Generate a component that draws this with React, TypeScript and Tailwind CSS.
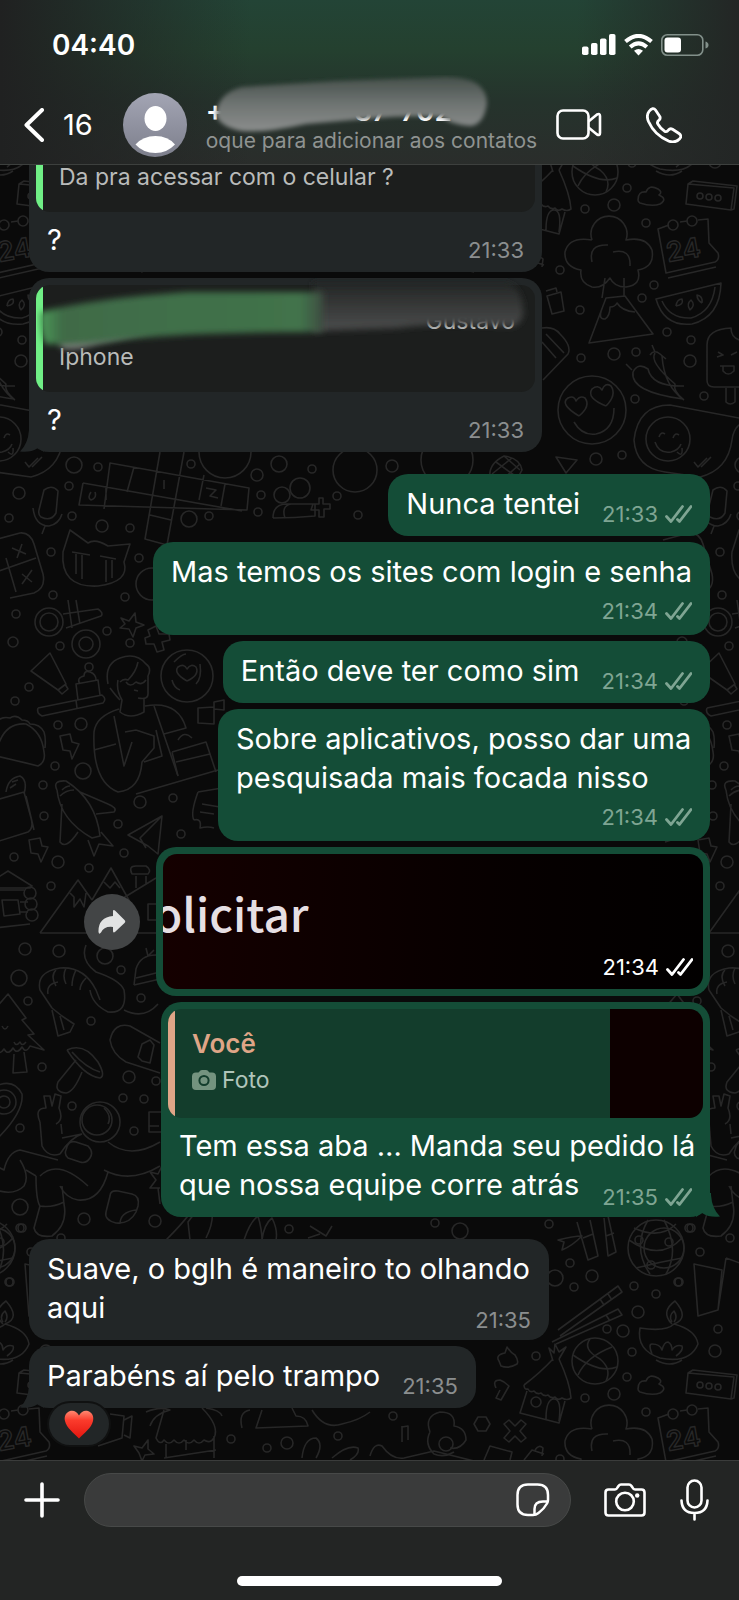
import { ReactNode } from "react";

// Wallpaper line drawings, repeated every TILE_W x TILE_H
const TILE_W = 669;
const TILE_H = 1189;

const DOODLES = [
  // hut
  "M524 196Q540 184 553 170M524 196q0 5 4 4q2 4 6 2q3 4 7 2q3 4 7 2q3 4 7 2q3 4 7 1q5 3 9 0Q570 194 559 170M527 202L520 224L559 234L565 212M546 230q0-20 8-20q8 0 5 22M553 172l-4-13l5 5l1-9l4 8l7-5l-7 12",
  // basketball
  "M573 166Q600 185 617 178M578 186Q586 168 612 158M590 150Q582 160 600 170Q612 180 606 192",
  // blossom cloud
  "M592 240a18 18 0 1 1 34 0q20-4 26 10q3 17-14 20q4 15-12 17q-12 0-16-9q-8 11-18 9q-13-4-11-17q-17-3-16-18q4-16 27-12M592 262q-4-18 16-17M613 252q18-4 17 14M605 278l-3 20M624 278v18",
  // volcano
  "M606 298L589 343L653 334L625 296ZM603 306q-6 14 2 13q5-3 5-12q5 0 7-4q5 8 18 9",
  // calendar
  "M669 225L658 229L666 273L715 262q5-3 3-9l-9-10l-1-24l-10 1M680 222l7-1M668 278l48-11",
  // box with dots
  "M688 184L686 204L731 210L734 188ZM688 184l5-3l44 5l-3 23l-3 1",
  // small cloud
  "M638 200q0-9 8-8q3-8 12-3q5 3 1 6q9 4 1 9q-8 3-20-1q-2-1-2-3",
  // melon
  "M656 299q8 28 36 25q28-7 29-41ZM662 301q8 18 29 17q21-6 24-31M676 306q1-7 6-7q2 6-6 7M690 310q-4-6 1-10q5 5-1 10M702 303q-5-3-5-8q6 1 5 8",
  // lotion
  "M547 296l14-4l3 19l-12 3ZM546 291l10-3l1 4",
  // pencil
  "M542 328q12-2 18 6q12 12 8 20L543 380M546 334l18 19M542 342l14 16",
  // love eyes
  "M579 416q-20-12-11-18q6-3 8 3q4-6 9-3q6 8-6 18M606 406q-20-8-14-17q6-5 10 1q3-8 9-4q6 9-5 20M574 422q8 14 22 12q18-4 18-26",
  // chilies
  "M633 372q-3 20 50 27q-10-8-8-15q-26-22-20-31M633 372q5-10 15-3q4 18 36 17M650 355q4-6 10-1l6 5M662 356q2 30 22 44M632 370l-6-6M655 352l-3-7",
  // ice pop
  "M707 380v-35q0-16 24-17q0 12 14 13v46l-31 0q-7 0-7-7M726 388v14q4 4 9 0v-14M718 352l5 3l-6 2M731 355l6-3M720 366h14v5q-6 6-11 0v-5",
  // chat bubble with face
  "M739 418L670 405Q638 405 634 440Q636 468 665 472L700 477Q728 470 732 440Q734 425 745 422M659 437q2-6 6-3M673 438q2-6 6-3M655 442q4 12 16 10q8-2 10-8M677 452q6 6 5-4M694 462l4 5l9-9M701 467l10-10",
  // arrow
  "M556 457l21 3l-11 13Z",
  // pineapple
  "M490 478q-2-14 14-22q16 2 18 14q-4 10-16 12ZM496 462l22 16M504 456l16 14M492 474l20-16M502 480l18-16",
  // microphone
  "M44 490q8-6 14 1l-2 22q-5 9-15 4q-3-2-2-7ZM33 508q2 18 16 18q10-2 13-12M45 526l-3 8",
  // crossword
  "M83 483L79 505L247 510L249 488L110 463L104 509M83 483L242 511M160 452L145 539L167 545L184 452M134 467L127 492M204 475L199 500M225 484L221 506M150 515L171 520M106 486v14M91 492q-4 6 0 8q6-2 4-8M164 480v9M206 488l10 2l-6 6l8 2",
  // contacts
  "M273 518q0-14 14-14h28v12q-20 2-42 2M285 518q-4-12 6-14M313 504h6v-6h4v6h7v5h-6v8h-5v-7h-8Z",
  // crying cat
  "M70 530L63 552Q60 588 98 586Q130 582 124 562L130 544L108 546Q95 538 88 543ZM72 552l18 3M76 554v20M82 555v24M100 556l16 3M106 560v22M112 560v18",
  // game pad keys
  "M-6 540L20 533Q30 532 34 544L43 574Q46 588 34 593L10 598M6 558L16 592M-4 572L36 558M12 548l14 6M22 544l-5 14M22 574l10 8M32 570l-10 14",
  // rollers
  "M63 614L98 609Q104 613 101 616L66 628M68 600L72 628M76 600L80 624",
  // star + plus
  "M121 618l8 3l6-8l1 9l8 3l-8 3l-3 9l-4-8l-9-1l5-4ZM148 630l8-4l3 8h10l1 6l-8 2l2 8l-7 2l-3-8h-8l-1-6l5-2Z",
  // tube
  "M31 671L50 653L66 684L58 690ZM58 690l4 4l6-5l-3-5",
  // tray with cake
  "M38 708L102 695q5 4 1 8L42 716q-6-3-4-8M78 700l-2-16l22-4l2 15M80 684q-4-6 4-8q0-6 6-4q6 2 6 8M76 700l1 8",
  // barista
  "M108 684Q104 664 120 658Q136 652 146 664Q152 668 148 676L148 694Q148 700 138 698M118 680Q116 690 122 700L120 712Q130 720 144 712V698M110 688Q116 696 120 700M120 682q4-4 8-2q8-8 10-18M126 682q4 6 10 0q6 4 10-2M134 690l4 1M119 709Q96 716 94 732Q92 782 118 792Q140 790 142 762L154 748V736L136 730M94 750L116 744M114 716L124 766L132 742M145 706Q178 700 186 728L164 734M154 706L178 776M136 794L218 770M125 732L136 730M144 762L162 756L156 730",
  // coin heart
  "M187 681q-14-8-9-14q6-4 9 2q4-6 9-2q4 8-9 14M174 662q8-8 12-8M200 664q2 14-4 20M172 680q2 8 8 10",
  // squares
  "M198 708l16-1v17l-16-1ZM214 702l10-2v10l-10-1Z",
  // taco
  "M-4 754Q2 722 26 724Q42 732 44 752Q46 762 38 766Q14 760-4 756M-4 722q6-6 14-4q6-4 12 2q6 0 8 4q10 0 14 8q2 6 1 16",
  // bolts
  "M60 736l10-2l2 8l7 2l-7 15l-2-8l-7-1ZM29 840l11-2l2 8l6 1l-7 15l-3-8l-7-1Z",
  // cake slice
  "M172 752L206 742L216 772M178 740q6-10 14-2M176 762L210 754M172 752L178 776",
  // toy rocket
  "M57 790Q52 780 66 781Q96 800 100 836L92 838Q60 820 57 790M80 792L108 804Q118 808 114 812L96 814M62 804L60 842Q66 850 78 832M62 790q4-4 8-4M88 840l6 16l5-12l14 2l-12-14M60 796q6-6 14-6",
  // paper planes
  "M128 835L162 816L158 854L148 846ZM162 816L140 838L146 848",
  // message scroll
  "M198 792L222 788M194 820q-4-6 4-28M194 820q8-2 6 8q8-2 14 0M202 804l18 3M200 812l14 2",
  // bag
  "M-4 842L28 832Q34 828 31 818L24 792L-4 800M6 792q2-14 14-16q8 4 4 18M10 788l6-4M12 782l6-2M26 796L34 830",
  // cabin
  "M-6 880L8 871L32 886L30 888H-6M2 900h16l2 14l-16 2ZM20 902h8M20 912h8M-6 890h30M-6 928L30 924",
  // mountains
  "M40 933L78 880L92 900M92 900L111 868L130 902M40 933H160M70 893l4 4v10l6-8l4 8l2-14M104 882l6 6l5-6l5 6",
  // chimney
  "M132 874q-4-8 4-8h10q6 4 2 8ZM136 876v12M146 876v8M120 900L156 878M148 904h10v16h-10Z",
  // shrimp
  "M40 990Q36 972 60 968Q84 966 96 990L100 1000M48 994Q46 984 58 982M56 970Q50 976 56 986M66 968Q62 976 66 984M76 970Q72 978 72 986M86 978Q80 984 80 990M52 1008L62 1016L74 1024L70 1032L58 1036L52 1010M60 1016L64 1030M40 990L52 1008",
  // hose
  "M86 945Q80 960 96 972Q120 980 124 990Q128 1014 108 1012Q92 1004 90 990M124 1010Q144 1020 158 1004",
  // woolly hat
  "M134 985l2-16q4-14 20-14M134 985l26-6M136 978l24-6M146 948l2 8l6-6",
  // pine
  "M-4 1008L8 994L26 1018L22 1020L34 1034L28 1035L44 1050L30 1046q-4 8-8 1q-5 8-9 1q-5 8-9 1q-4 6-8 2M14 1054L13 1073L27 1072L24 1052M2 1026q3 6 6 0M14 1042q2 5 6 0q2 5 6 0",
  // mushroom
  "M67 1050Q84 1042 98 1062Q106 1076 100 1078Q84 1076 67 1050M76 1060L58 1082Q54 1092 66 1093Q74 1092 82 1072M72 1052q14 16 28 20",
  // skateboard
  "M160 1043L130 1026Q114 1022 110 1040Q112 1054 126 1062L160 1073M142 1044l8-4l4 5l-4 18l-8-2l-4-4Z",
  // map pin
  "M-4 1086Q14 1078 22 1094Q24 1112-2 1138",
  // waving spaceman
  "M40 1122Q34 1108 46 1108L44 1096l6 0l2 10l3-12l6 2l-2 12Q64 1120 56 1124M40 1122L42 1146Q48 1158 60 1154M62 1134L61 1124M62 1138L82 1134M60 1154Q70 1138 82 1134M108 1142Q130 1160 160 1142M104 1170Q130 1184 160 1166M108 1172Q100 1202 78 1200Q66 1198 60 1186M40 1176Q58 1158 88 1186M36 1176Q36 1200 40 1206L34 1228Q36 1238 52 1236Q68 1224 64 1204L62 1186M40 1206Q52 1208 64 1202M58 1160L20 1150Q8 1152 4 1170L-4 1166M20 1160Q30 1176 24 1186Q14 1196-4 1190M26 1170L36 1176M66 1150q2-10 10-8l12 4q6 6 2 12q-4 6-10 4l-12-4q-4-4-2-8M104 1108Q112 1116 108 1124",
  // sticker
  "M110 1196Q110 1190 118 1191L132 1194Q140 1196 138 1206L136 1212Q130 1224 116 1223Q104 1220 106 1212ZM120 1224Q120 1212 136 1210",
  // gift corner
  "M149 1112h14v20h-14ZM149 1126h10M150 1172l8 2l4-8M150 1172l6 8l-6 8l10 0M158 1188l2 16",
  // flower row
  "M166 1240Q186 1220 192 1210M190 1240L188 1222L194 1214M206 1238Q214 1222 212 1210M244 1240Q250 1222 258 1216Q262 1230 262 1240M262 1240Q264 1224 272 1218Q278 1230 276 1240M310 1226l16 10l6-10M308 1238l12-4",
  // bamboo
  "M577 1222L588 1260L598 1256L590 1220M604 1218L608 1256L616 1252L608 1216M583 1238l10-4M606 1236l8-3M558 1240q16-4 24-4q-10 10-20 14l2-8Z",
  // globe lines
  "M629 1240Q660 1262 682 1238M634 1228Q660 1240 676 1224M636 1268Q660 1262 682 1258M648 1220Q632 1248 650 1274M664 1220Q680 1250 666 1274",
  // cards
  "M694 1264L722 1270L718 1310L698 1316ZM726 1258L718 1310M726 1258L748 1266",
  // chopsticks
  "M558 1330L618 1286l4 6L560 1336M552 1342L618 1309l4 6L556 1344M608 1294l4 6M600 1299l4 6M606 1315l4 6",
  // oil lamp
  "M640 1328Q636 1350 660 1358Q690 1364 698 1344Q696 1330 674 1324Q666 1332 640 1328ZM672 1324Q660 1312 675 1301Q690 1318 674 1324M652 1354q-4-10 0-10q8 0 10 6q2-8 6-8q4 2 4 8q4-6 10-4q2 4-6 10M656 1360q14 8 26 0M672 1322q-4-6 2-11q4 6 0 11",
  // leaf bits
  "M499 1361q-4-6 6-8l2-6q4 6 8 8q4 6 2 9q-8 5-16 2ZM496 1388q-4-8 4-8l4 2l5 4l-8 14l-5-2l4-8",
  // hex and cross
  "M474 1424l4-7h8l4 7l-4 7h-8ZM504 1424l5-4l6 6l6-6l5 4l-6 7l6 7l-5 4l-6-6l-6 6l-5-4l6-7Z",
  // notes
  "M402 1426v16M402 1427l6-1v14M370 1456q4-14 12-10q10 14 22 12l30-7l40 10",
  // bud
  "M430 1432q-6-16 10-20q16 0 14 14q12 2 12 14q-6 10-16 8M430 1432q-6 12 4 22q10 4 20-2",
  // gifts
  "M484 1460l6-14l22 6l-2 8M524 1460l8-10l12 4M535 1450q4-6 8-2l-1 8",
  // camcorder
  "M98 1446L122 1438L124 1416L110 1414M124 1420l8-4l-2 22l-6-3",
  // beach hut
  "M164 1410L156 1438q4 8 8 2q5 6 10 0q5 6 10 0q5 6 10 0q5 6 10 0q6 4 10-2q6-12-12-30M166 1444v14M186 1440v10M214 1436v22M164 1458l52-8M146 1412q14-6 24-2q-16 4-20 16M206 1408q14 2 16 8",
  // food truck
  "M242 1428q-4-16 8-18M262 1410l-6 18l52-2q-2-10-12-10l-4-8M312 1410q12 20 30 14q18-4 28-12",
  // sandal
  "M302 1458q2-20 14-20q8 6 0 20M332 1458q16-14 26-10q2 6-8 12M134 1446l8 2l6-8l0 9l6 5l-9 1l-3 6l-3-8Z",
];

const RINGS = [
  [595, 172, 23], [536, 213, 5], [673, 225, 5], [692, 221, 5], [700, 196, 3], [709, 197, 3], [718, 198, 3],
  [627, 188, 4], [585, 209, 4], [614, 205, 6], [646, 223, 4], [654, 285, 4], [642, 298, 4], [560, 270, 4],
  [580, 310, 4], [667, 332, 4], [691, 340, 4], [614, 354, 6], [636, 352, 4], [690, 361, 6], [581, 358, 4],
  [592, 410, 34], [635, 399, 4], [704, 396, 4], [668, 439, 22], [596, 459, 6], [622, 455, 4], [447, 460, 26],
  [392, 466, 6], [74, 465, 8], [98, 467, 4], [69, 486, 4], [19, 493, 6], [9, 518, 4], [72, 516, 4], [102, 526, 6],
  [130, 528, 4], [189, 519, 8], [209, 516, 4], [191, 464, 4], [225, 452, 26], [257, 475, 6], [279, 464, 8],
  [312, 469, 4], [282, 495, 8], [300, 488, 10], [261, 495, 4], [258, 512, 4], [337, 496, 4], [358, 515, 4],
  [355, 470, 22], [51, 552, 4], [139, 558, 4], [152, 584, 16], [53, 595, 4], [125, 597, 4], [16, 614, 4],
  [49, 622, 14], [49, 622, 9], [86, 644, 14], [86, 644, 7], [107, 631, 4], [60, 646, 4], [130, 643, 4],
  [13, 642, 5], [89, 667, 4], [29, 687, 4], [15, 701, 4], [187, 676, 26], [58, 725, 4], [81, 724, 6],
  [55, 766, 4], [83, 771, 8], [43, 785, 4], [140, 802, 6], [173, 798, 4], [44, 816, 4], [118, 824, 4],
  [181, 834, 4], [124, 853, 4], [58, 862, 6], [14, 857, 4], [89, 868, 4], [51, 886, 4], [30, 893, 6],
  [31, 904, 6], [32, 915, 6], [25, 949, 6], [59, 951, 6], [105, 956, 8], [121, 970, 4], [19, 978, 8],
  [28, 1001, 4], [91, 1021, 4], [141, 998, 4], [42, 1067, 4], [129, 1077, 6], [156, 1081, 4], [4, 1102, 6],
  [4, 1102, 12], [72, 1106, 4], [123, 1098, 4], [144, 1099, 4], [20, 1128, 4], [134, 1131, 4],
  [100, 1122, 20], [97, 1120, 15], [20, 1207, 8], [84, 1219, 6], [22, 1228, 4], [155, 1221, 6], [-5, 1248, 20],
  [10, 1282, 4], [435, 1223, 4], [460, 1231, 8], [549, 1224, 4], [289, 1229, 4], [656, 1248, 28], [689, 1228, 4],
  [730, 1238, 4], [700, 1252, 4], [639, 1240, 4], [669, 1242, 4], [651, 1265, 4], [570, 1263, 4], [592, 1276, 6],
  [574, 1287, 4], [634, 1286, 4], [656, 1294, 4], [678, 1282, 4], [638, 1312, 6], [555, 1278, 8], [607, 1329, 4],
  [623, 1331, 6], [632, 1352, 4], [536, 1356, 4], [718, 1329, 4], [715, 1351, 6], [393, 1416, 4],
  [446, 1444, 7], [231, 1439, 4], [267, 1448, 4], [287, 1443, 6], [338, 1436, 4],
];

const OFFSETS = [-1, 0, 1].flatMap((x) => [-1, 0, 1].map((y) => [x * TILE_W, y * TILE_H]));

function Wallpaper() {
  return (
    <svg className="absolute inset-0 h-full w-full" fill="none" stroke="#272727" strokeWidth="1.6" strokeLinejoin="round" aria-hidden="true">
      <defs>
        <g id="doodles">
          {DOODLES.map((d, i) => (
            <path key={i} d={d} />
          ))}
          {RINGS.map(([cx, cy, r], i) => (
            <circle key={i} cx={cx} cy={cy} r={r} />
          ))}
          <text x="668" y="262" fontSize="27" fontFamily="Inter, sans-serif" fontWeight="600" strokeWidth="1.4" transform="rotate(-10 668 262)">24</text>
        </g>
      </defs>
      <g transform="translate(0 -165)">
        {OFFSETS.map(([x, y], i) => (
          <use key={i} href="#doodles" x={x} y={y} />
        ))}
      </g>
    </svg>
  );
}

function Ticks() {
  return (
    <svg width="27" height="18" viewBox="0 0 27 18" fill="none" stroke="currentColor" strokeWidth="2.8" strokeLinecap="round" strokeLinejoin="round" aria-hidden="true">
      <path d="M1.5 11.5L6 16.5L17.5 1.5M12.5 14.5L14.5 16.5L26 1.5" />
    </svg>
  );
}

function Stamp({ time, sent, light }: { time: string; sent?: boolean; light?: boolean }) {
  return (
    <span
      className={`flex shrink-0 items-center gap-[7px] text-[22px] leading-6 ${
        light ? "text-white" : sent ? "text-[#7fa593]" : "text-[#8b8e8f]"
      }`}
    >
      {time}
      {sent && <Ticks />}
    </span>
  );
}

function Tail({ side }: { side: "left" | "right" }) {
  return (
    <svg
      width="24"
      height="24"
      viewBox="0 0 24 24"
      className={side === "left" ? "absolute bottom-0 -left-[9px] text-[#222627]" : "absolute -right-[10px] bottom-0 -scale-x-100 text-[#144d37]"}
      fill="currentColor"
      aria-hidden="true"
    >
      <path d="M9 0V2Q8 16 0 23.5Q10 25 18 20L24 24V0Z" />
    </svg>
  );
}

type Layout = "inline" | "below" | "float";

// where the time goes relative to the text
const bodyClass: Record<Layout, string> = {
  inline: "flex items-end justify-between gap-[22px]",
  below: "flex flex-col gap-2 pb-3",
  float: "pb-2",
};
const stampClass: Record<Layout, string> = {
  inline: "pb-[10px]",
  below: "self-end",
  float: "float-right mt-5 mr-2",
};

type BubbleProps = {
  text: string;
  time: string;
  sent?: boolean;
  layout?: Layout;
  tail?: boolean;
  quote?: ReactNode;
  className?: string;
  children?: ReactNode;
};

function Bubble({ text, time, sent, layout = "inline", tail, quote, className = "", children }: BubbleProps) {
  const stamp = (
    <span className={stampClass[layout]}>
      <Stamp time={time} sent={sent} />
    </span>
  );

  return (
    <div className={`relative rounded-[20px] ${sent ? "self-end bg-[#144d37]" : "self-start bg-[#222627]"} ${className}`}>
      {tail && <Tail side={sent ? "right" : "left"} />}
      {quote && <div className="relative px-[7px] pt-[7px]">{quote}</div>}
      <div className={`relative px-[18px] ${quote ? "pt-2" : "pt-[10px]"} ${bodyClass[layout]}`}>
        {layout === "float" ? (
          <p className="-mr-2 flow-root text-[29px] leading-[39px] text-white">
            {text}
            {stamp}
          </p>
        ) : (
          <>
            <p className={`text-[29px] leading-[39px] text-white ${layout === "inline" ? "pb-[13px]" : ""}`}>{text}</p>
            {stamp}
          </>
        )}
      </div>
      {children}
    </div>
  );
}

function ReceivedQuote({ name, text }: { name?: string; text: string }) {
  return (
    <div className="flex h-[107px] overflow-hidden rounded-[14px] bg-[#1c1e1d]">
      <div className="w-[7px] bg-[#70ef86]" />
      <div className="flex flex-1 flex-col pt-[18px] pr-5 pl-4 text-[23px] leading-9">
        <div className="h-9 self-end text-[#c4c6c5]">{name}</div>
        <div className="text-[#b9bbba]">{text}</div>
      </div>
    </div>
  );
}

function SignalIcon() {
  return (
    <svg width="34" height="22" viewBox="0 0 34 22" fill="currentColor" aria-hidden="true">
      <rect x="0" y="12.5" width="6.5" height="8.5" rx="1.8" />
      <rect x="9" y="9" width="6.5" height="12" rx="1.8" />
      <rect x="18" y="4.5" width="6.5" height="16.5" rx="1.8" />
      <rect x="27" y="0" width="6.5" height="21" rx="1.8" />
    </svg>
  );
}

function WifiIcon() {
  return (
    <svg width="29" height="22" viewBox="0 0 29 22" fill="none" stroke="currentColor" strokeWidth="4" aria-hidden="true">
      <path d="M1.5 7.6Q14.5 -3.8 27.5 7.6" />
      <path d="M6.2 13Q14.5 5.6 22.8 13" />
      <path d="M10 16.8Q14.5 13 19 16.8L14.5 21.5Z" fill="currentColor" stroke="none" />
    </svg>
  );
}

function BatteryIcon() {
  return (
    <svg width="48" height="22" viewBox="0 0 48 22" fill="none" aria-hidden="true">
      <rect x="0.8" y="0.8" width="41" height="20.4" rx="5.5" stroke="#82908a" strokeWidth="1.6" />
      <rect x="3.5" y="3.5" width="16.5" height="15" rx="3" fill="#fff" />
      <path d="M44.5 7.5Q47.5 8.5 47.5 11Q47.5 13.5 44.5 14.5Z" fill="#82908a" />
    </svg>
  );
}

function Header() {
  return (
    <header className="relative z-10 shrink-0 border-b border-[#3d403e] bg-[linear-gradient(to_right,#202121_0%,#20212100_34%,#23262500_78%,#232625_100%),linear-gradient(to_bottom,#234436_0%,#24402f_30%,#25332c_62%,#2a2d2b_100%)] pt-[31px] pb-[7px] text-white">
      <div className="flex h-7 items-center justify-between pr-[30px] pl-[52px]">
        <span className="text-[28px] leading-7 font-semibold">04:40</span>
        <div className="flex items-center gap-2">
          <SignalIcon />
          <WifiIcon />
          <BatteryIcon />
        </div>
      </div>
      <div className="mt-[34px] flex h-16 items-center pr-[57px] pl-6">
        <button type="button" aria-label="Voltar" className="flex items-center gap-[19px] text-[29px] leading-8">
          <svg width="20" height="34" viewBox="0 0 20 34" fill="none" stroke="currentColor" strokeWidth="4" strokeLinecap="round" strokeLinejoin="round" aria-hidden="true">
            <path d="M18 2L2.5 17L18 32" />
          </svg>
          16
        </button>
        <svg width="64" height="64" viewBox="0 0 64 64" className="ml-[30px] shrink-0" aria-hidden="true">
          <defs>
            <linearGradient id="avatar" x1="0" y1="0" x2="0" y2="1">
              <stop offset="0" stopColor="#a3a5b4" />
              <stop offset="1" stopColor="#7d7f8c" />
            </linearGradient>
          </defs>
          <circle cx="32" cy="32" r="32" fill="url(#avatar)" />
          <ellipse cx="32.5" cy="25.5" rx="11" ry="12.5" fill="#fff" />
          <path d="M12.5 51.5Q20 43 32.5 43Q45 43 52 51.5Q44 60 32.5 60Q20 60 12.5 51.5Z" fill="#fff" />
        </svg>
        <div className="relative ml-[19px] min-w-0 flex-1">
          <div className="flex justify-between pr-[85px] text-[28px] leading-8 font-semibold whitespace-nowrap">
            <span>+</span>
            <span>37-702</span>
          </div>
          <div className="text-right text-[21px] leading-7 whitespace-nowrap text-[#8f9391]">oque para adicionar aos contatos</div>
          {/* smear over the phone number */}
          <svg width="300" height="70" viewBox="0 0 300 70" className="absolute -top-5 left-0" aria-hidden="true">
            <defs>
              <linearGradient id="smear" x1="0" y1="0" x2="0" y2="1">
                <stop offset="0" stopColor="#46504b" />
                <stop offset="0.5" stopColor="#6f7472" />
                <stop offset="1" stopColor="#8b8e8d" />
              </linearGradient>
              <filter id="soft" x="-10%" y="-20%" width="120%" height="140%">
                <feGaussianBlur stdDeviation="2" />
              </filter>
            </defs>
            <path d="M10 40Q12 18 36 12L130 6L240 2Q280 2 281 28Q278 50 264 51Q246 50 236 42Q200 40 170 43L100 49Q60 58 36 56Q14 52 10 40Z" fill="url(#smear)" filter="url(#soft)" />
          </svg>
        </div>
        <button type="button" aria-label="Chamada de vídeo" className="ml-[19px]">
          <svg width="46" height="32" viewBox="0 0 46 32" fill="none" stroke="currentColor" strokeWidth="2.6" strokeLinejoin="round" aria-hidden="true">
            <rect x="1.5" y="1.5" width="31" height="28" rx="5.5" />
            <path d="M32.5 12.5L41 5.5Q44 4 44 7V24Q44 27 41 25.5L32.5 18.5" />
          </svg>
        </button>
        <button type="button" aria-label="Ligar" className="ml-[44px]">
          <svg width="36" height="36" viewBox="0 0 36 36" fill="none" stroke="currentColor" strokeWidth="2.8" strokeLinejoin="round" aria-hidden="true">
            <path d="M3 4.5Q7 -0.5 9.5 3L13.8 9.5Q14.8 11.5 13 13.2Q10.5 15.2 12 17.2Q14.5 21.5 18.5 24.2Q20.8 25.5 22.5 23Q24.2 21 26.5 22.3L33 26.5Q36.5 29 33.5 32Q29 36.5 22.5 34Q8.5 28 2.5 14.5Q0 8.5 3 4.5Z" />
          </svg>
        </button>
      </div>
    </header>
  );
}

function NameSmear() {
  return (
    <svg width="500" height="84" viewBox="0 0 500 84" className="absolute -top-1 left-2" aria-hidden="true">
      <defs>
        <linearGradient id="nameSmear" x1="0" y1="0" x2="1" y2="0">
          <stop offset="0" stopColor="#4b9a58" />
          <stop offset="0.08" stopColor="#3f6b47" />
          <stop offset="0.92" stopColor="#42734b" />
          <stop offset="1" stopColor="#3d4c40" />
        </linearGradient>
        <linearGradient id="greyFade" x1="0" y1="0" x2="0" y2="1">
          <stop offset="0" stopColor="#232625" />
          <stop offset="1" stopColor="#4c4d4d" />
        </linearGradient>
        <filter id="nameSoft" x="-5%" y="-20%" width="110%" height="140%">
          <feGaussianBlur stdDeviation="3" />
        </filter>
      </defs>
      <path d="M22 64Q60 56 120 56L60 70Q36 78 24 74Z" fill="#7b7d7c" filter="url(#nameSoft)" />
      <path d="M276 8L470 8Q488 16 486 42Q482 54 468 52Q400 48 360 54L276 57Z" fill="url(#greyFade)" filter="url(#nameSoft)" />
      <path d="M3 38Q60 24 150 18H286V58Q160 58 90 65Q40 72 8 70Q2 58 3 38Z" fill="url(#nameSmear)" filter="url(#nameSoft)" />
    </svg>
  );
}

function Chat() {
  return (
    <main className="relative flex min-h-0 flex-1 flex-col justify-end overflow-hidden bg-[#0a0a0a]">
      <Wallpaper />
      <div className="relative flex flex-col gap-[6px] pr-[29px] pb-[52px] pl-[29px]">
        <Bubble text="?" time="21:33" className="w-[513px]" quote={<ReceivedQuote text="Da pra acessar com o celular ?" />} />
        <Bubble text="?" time="21:33" tail className="w-[513px]" quote={<ReceivedQuote name="Gustavo" text="Iphone" />}>
          <NameSmear />
        </Bubble>

        <div className="h-[10px]" />
        <Bubble sent text="Nunca tentei" time="21:33" />
        <Bubble sent layout="below" text="Mas temos os sites com login e senha" time="21:34" />
        <Bubble sent text="Então deve ter como sim" time="21:34" />
        <Bubble sent layout="below" text="Sobre aplicativos, posso dar uma pesquisada mais focada nisso" time="21:34" className="w-[492px]" />

        <div className="flex items-center gap-4 self-end">
          <button type="button" aria-label="Encaminhar" className="flex h-14 w-14 items-center justify-center rounded-full bg-[#434546] text-[#e2e3e3]">
            <svg width="28" height="24" viewBox="0 0 28 24" fill="currentColor" aria-hidden="true">
              <path d="M15 1.5Q15 -1 17.5 1L26.5 10Q28 11.5 26.5 13L17.5 21.5Q15 23.5 15 21V17Q6 16 3 22.5Q1 25 0.5 22Q0 7.5 15 6Z" />
            </svg>
          </button>
          <div className="w-[554px] rounded-[20px] bg-[#144d37] p-[7px]">
            <div className="flex h-[135px] items-center justify-between overflow-hidden rounded-[14px] bg-linear-to-r from-[#150000] to-[#020000] pr-[10px]">
              <span className="-ml-[9px] pb-5 font-['Noto_Sans_CJK_JP','Noto_Sans',sans-serif] text-[46px] leading-[60px] font-medium text-[#e6dfe3]">olicitar</span>
              <span className="self-end pb-[10px]">
                <Stamp time="21:34" sent light />
              </span>
            </div>
          </div>
        </div>

        <Bubble
          sent
          tail
          layout="float"
          text="Tem essa aba … Manda seu pedido lá que nossa equipe corre atrás"
          time="21:35"
          className="w-[549px]"
          quote={
            <div className="flex h-[109px] overflow-hidden rounded-[14px] bg-[#133d2c]">
              <div className="w-[7px] bg-[#dfa587]" />
              <div className="flex-1 pt-[17px] pl-[17px]">
                <div className="text-[26px] leading-9 font-semibold text-[#dfa587]">Você</div>
                <div className="flex items-center gap-[6px] text-[23px] leading-9 text-[#b0c4ba]">
                  <svg width="24" height="20" viewBox="0 0 24 20" aria-hidden="true">
                    <path fill="#74937f" d="M7.5 1.5Q8 0 10 0H14Q16 0 16.5 1.5L17.5 2.5H20Q24 2.5 24 6.5V16Q24 20 20 20H4Q0 20 0 16V6.5Q0 2.5 4 2.5H6.5Z" />
                    <circle cx="12" cy="10.5" r="4.6" fill="none" stroke="#133d2c" strokeWidth="2" />
                  </svg>
                  Foto
                </div>
              </div>
              <div className="w-[93px] bg-[#0d0000]" />
            </div>
          }
        />

        <div className="h-[10px]" />
        <Bubble layout="float" text="Suave, o bglh é maneiro to olhando aqui" time="21:35" className="w-[520px]" />
        <Bubble text="Parabéns aí pelo trampo" time="21:35" tail>
          <button type="button" aria-label="Reação" className="absolute -bottom-[37px] left-5 flex h-[42px] w-[60px] items-center justify-center rounded-full bg-[#222627] ring-2 ring-[#101111]">
            <svg width="30" height="29" viewBox="0 0 30 29" aria-hidden="true">
              <defs>
                <linearGradient id="heart" x1="0" y1="0" x2="0" y2="1">
                  <stop offset="0" stopColor="#ff8a72" />
                  <stop offset="0.35" stopColor="#fb3b2c" />
                  <stop offset="1" stopColor="#e3160f" />
                </linearGradient>
              </defs>
              <path d="M15 5.5C17 1 21 0 24 1C28.5 2.5 30 7 29 11C27.5 18 20 23 15 28.5C10 23 2.5 18 1 11C0 7 1.5 2.5 6 1C9 0 13 1 15 5.5Z" fill="url(#heart)" />
            </svg>
          </button>
        </Bubble>
      </div>
    </main>
  );
}

function Composer() {
  return (
    <footer className="shrink-0 border-t border-[#3a3c3b] bg-[#232524] pt-3 pb-[14px] text-white">
      <form className="flex items-center pr-[30px] pl-6" onSubmit={(e) => e.preventDefault()}>
        <button type="button" aria-label="Anexar">
          <svg width="36" height="36" viewBox="0 0 36 36" stroke="currentColor" strokeWidth="3.6" strokeLinecap="round" aria-hidden="true">
            <path d="M18 2V34M2 18H34" />
          </svg>
        </button>
        <div className="ml-6 flex h-[54px] min-w-0 flex-1 items-center rounded-full border border-[#474948] bg-[#3a3b3b] pr-5 pl-6">
          <input type="text" aria-label="Mensagem" className="min-w-0 flex-1 bg-transparent text-[29px] outline-none" />
          <button type="button" aria-label="Figurinhas">
            <svg width="34" height="34" viewBox="0 0 34 34" fill="none" stroke="currentColor" strokeWidth="2.5" strokeLinejoin="round" aria-hidden="true">
              <path d="M32 17V12Q32 1.5 21.5 1.5H12Q1.5 1.5 1.5 12V21.5Q1.5 32 12 32H17Q20 32 22.5 30Q28 26 31 20.5Q32 19 32 17Z" />
              <path d="M32 18.5H27Q18.5 18.5 18.5 26V31.5" />
            </svg>
          </button>
        </div>
        <button type="button" aria-label="Câmera" className="ml-[33px]">
          <svg width="42" height="34" viewBox="0 0 42 34" fill="none" stroke="currentColor" strokeWidth="2.6" strokeLinejoin="round" aria-hidden="true">
            <path d="M4.5 6.5H11Q12.5 6.5 13.5 4.5L14.5 3Q15.5 1.5 17 1.5H25Q26.5 1.5 27.5 3L28.5 4.5Q29.5 6.5 31 6.5H37.5Q40.5 6.5 40.5 9.5V29.5Q40.5 32.5 37.5 32.5H4.5Q1.5 32.5 1.5 29.5V9.5Q1.5 6.5 4.5 6.5Z" />
            <circle cx="21" cy="18.5" r="8.8" />
            <circle cx="33.2" cy="12.5" r="2.2" fill="currentColor" stroke="none" />
          </svg>
        </button>
        <button type="button" aria-label="Gravar áudio" className="ml-[34px]">
          <svg width="29" height="42" viewBox="0 0 29 42" fill="none" stroke="currentColor" strokeWidth="2.6" strokeLinecap="round" aria-hidden="true">
            <rect x="7.5" y="1.5" width="14" height="27" rx="7" />
            <path d="M1.5 21.5Q2 34 14.5 34Q27 34 27.5 21.5M14.5 34V40.5" />
          </svg>
        </button>
      </form>
      <div className="mx-auto mt-[49px] h-[10px] w-[265px] rounded-full bg-white" />
    </footer>
  );
}

export default function App() {
  return (
    <div className="flex h-screen flex-col bg-[#0a0a0a] font-['Inter','Liberation_Sans',sans-serif]">
      <Header />
      <Chat />
      <Composer />
    </div>
  );
}
